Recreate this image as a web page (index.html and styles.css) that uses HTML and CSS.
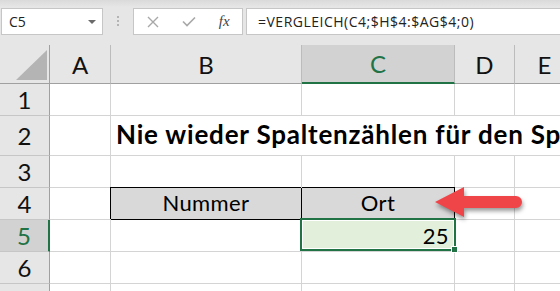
FILE: index.html
```html
<!doctype html>
<html>
<head>
<meta charset="utf-8">
<title>VERGLEICH</title>
<link rel="stylesheet" href="styles.css">
</head>
<body>
<div class="fbar">
	<div class="namebox"><span>C5</span><span class="caret"></span></div>
	<div class="grip"><i></i><i></i><i></i></div>
	<div class="fbtns">
		<span class="fbtn"><svg width="12" height="12" viewBox="0 0 12 12"><path d="M1 1L11 11M11 1L1 11" stroke="#a8a8a8" stroke-width="1.4" fill="none"/></svg></span>
		<span class="fbtn"><svg width="14" height="11" viewBox="0 0 14 11"><path d="M1 5.5L5 9.5L13 1.5" stroke="#a8a8a8" stroke-width="1.6" fill="none"/></svg></span>
		<span class="fbtn fx">fx</span>
	</div>
	<div class="formula">=VERGLEICH(C4;$H$4:$AG$4;0)</div>
</div>

<div class="sheet">
	<div class="cell corner"><div class="tri"></div></div>
	<div class="cell ch">A</div>
	<div class="cell ch">B</div>
	<div class="cell ch ch-sel">C</div>
	<div class="cell ch">D</div>
	<div class="cell ch">E</div>
	<div class="cell ch">F</div>

	<div class="cell rh">1</div>
	<div class="cell"></div><div class="cell"></div><div class="cell"></div><div class="cell"></div><div class="cell"></div><div class="cell"></div>

	<div class="cell rh">2</div>
	<div class="cell"></div>
	<div class="cell title">Nie wieder Spaltenzählen für den Spaltenindex</div>

	<div class="cell rh">3</div>
	<div class="cell"></div><div class="cell"></div><div class="cell"></div><div class="cell"></div><div class="cell"></div><div class="cell"></div>

	<div class="cell rh">4</div>
	<div class="cell"></div>
	<div class="cell box box-first">Nummer</div>
	<div class="cell box">Ort</div>
	<div class="cell"></div><div class="cell"></div><div class="cell"></div>

	<div class="cell rh rh-sel">5</div>
	<div class="cell"></div><div class="cell"></div>
	<div class="cell active">25<div class="sel"><div class="handle"></div></div></div>
	<div class="cell"></div><div class="cell"></div><div class="cell"></div>

	<div class="cell rh">6</div>
	<div class="cell"></div><div class="cell"></div><div class="cell"></div><div class="cell"></div><div class="cell"></div><div class="cell"></div>

	<div class="cell rh">7</div>
	<div class="cell"></div><div class="cell"></div><div class="cell"></div><div class="cell"></div><div class="cell"></div><div class="cell"></div>

	<svg class="arrow" width="110" height="50" viewBox="0 0 110 50"><path d="M10 25L39 10L39 19L91 19A6 6 0 0 1 91 31L39 31L39 40Z" fill="#ef4548"/></svg>
</div>
</body>
</html>
```

FILE: styles.css
```css
* {margin:0; padding:0; box-sizing:border-box;}

body {width:560px; height:291px; overflow:hidden; background:#e6e6e6; font-family:Lato, "Liberation Sans", sans-serif; color:#000;}

/* formula bar */
.fbar {height:45px; display:flex; align-items:flex-start; padding:8px 0 0 1px; background:linear-gradient(#dadada, #e6e6e6 7px);}
.namebox {width:102px; height:27px; background:#fff; border:1px solid #c6c6c6; display:flex; align-items:center; justify-content:space-between; padding:0 6px 0 7px; font-family:"Open Sans", sans-serif; font-size:14px; color:#222;}
.caret {border-left:4px solid transparent; border-right:4px solid transparent; border-top:4px solid #6a6a6a;}
.grip {width:30px; display:flex; flex-direction:column; align-items:center; gap:2px; padding-top:8px;}
.grip i {display:block; width:2px; height:2px; background:#b4b4b4;}
.fbtns {width:110px; height:27px; background:#fff; border:1px solid #c6c6c6; display:flex; align-items:center; padding-left:1px;}
.fbtn {width:36px; display:flex; justify-content:center; align-items:center;}
.fx {font-family:"Liberation Serif", serif; font-style:italic; font-size:15px; color:#444;}
.formula {flex:1; height:27px; margin-left:3px; background:#fff; border:1px solid #c6c6c6; border-right:none; padding-left:11px; font-family:"Open Sans", sans-serif; font-size:14px; letter-spacing:0.5px; line-height:25px; color:#222; white-space:nowrap;}

/* sheet */
.sheet {position:relative; width:640px; height:246px; overflow:hidden; display:grid; grid-template-columns:50px 61px 191px 153px 60px 60px 1fr; grid-template-rows:39px 32px 40px 32px 32px 32px 32px 32px; background:#fff;}
.cell {border-right:1px solid #d4d4d4; border-bottom:1px solid #d4d4d4; display:flex; align-items:flex-end; padding:0 5px 3px; font-size:22px; letter-spacing:0.4px; white-space:nowrap;}

.corner {background:#e6e6e6; border-right-color:#a0a0a0; border-bottom-color:#a0a0a0; justify-content:flex-end; padding:0 2px 3px 0;}
.tri {width:31px; height:30px; background:#b4b4b4; clip-path:polygon(100% 0, 100% 100%, 0 100%);}

.ch {background:#e6e6e6; border-right-color:#bcbcbc; border-bottom-color:#a0a0a0; justify-content:center; align-items:center; padding:0; font-size:24px; letter-spacing:0; color:#111;}
.ch-sel {background:#d2d2d2; border-bottom:2px solid #217346; color:#217346;}
.rh {background:#e6e6e6; border-right-color:#a0a0a0; border-bottom-color:#c6c6c6; justify-content:center; align-items:center; padding:0; font-size:24px; letter-spacing:0; color:#111;}
.rh-sel {background:#d2d2d2; border-right:2px solid #217346; color:#217346;}

.title {grid-column:3 / -1; border-right:none; overflow:hidden; font-weight:bold; font-size:26px; letter-spacing:0.8px; padding-left:5px; padding-bottom:5px;}

.box {background:#d9d9d9; border-right-color:#000; border-bottom-color:#000; justify-content:center; box-shadow:0 -1px 0 #000;}
.box-first {box-shadow:-1px -1px 0 #000;}

.active {position:relative; background:#e2efda; justify-content:flex-end; padding-bottom:2px;}
.sel {position:absolute; top:-2px; left:-2px; width:156px; height:33px; border:2px solid #217346; box-shadow:inset 0 0 0 1px #fff;}
.handle {position:absolute; right:-4px; bottom:-4px; width:7px; height:7px; background:#217346; border:1px solid #fff;}

.arrow {position:absolute; left:425px; top:132px; filter:drop-shadow(1px 3px 2px rgba(0,0,0,.4));}
```
